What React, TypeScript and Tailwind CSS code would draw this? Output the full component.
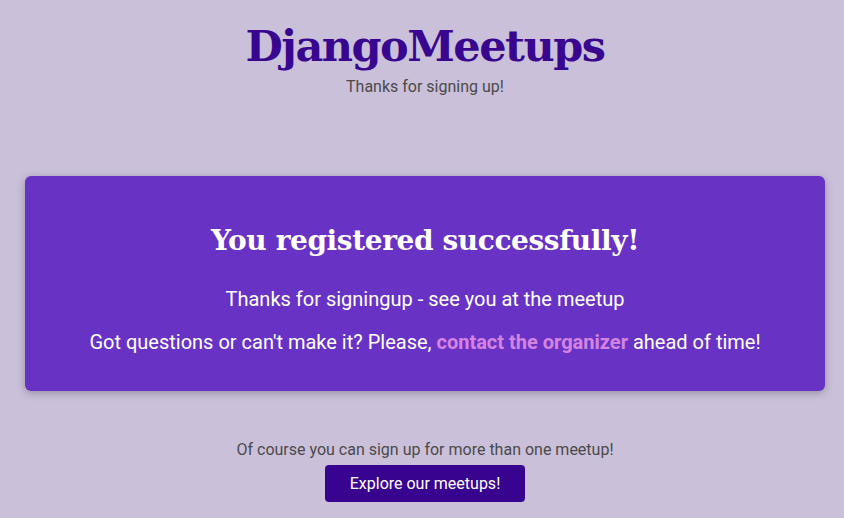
const App = () => {
  return (
    <div className="min-h-screen bg-[#cac0da] font-['Roboto',sans-serif] text-[#4a4a4a]">
      <div className="ml-[25px] w-[800px]">
        <header className="flex flex-col items-center pt-[18px]">
          <h1 className="font-['DejaVu_Serif',serif] text-[43px] leading-[56px] font-bold tracking-[-1.5px] text-[#39078f]">
            DjangoMeetups
          </h1>
          <p className="mt-[3px] text-base leading-5">Thanks for signing up!</p>
        </header>
        <main className="pt-[79px]">
          <section className="flex flex-col items-center rounded-md bg-[#6833c5] pt-[45px] pb-[37px] text-white shadow-[0_2px_8px_rgba(0,0,0,0.26)]">
            <h2 className="font-['DejaVu_Serif',serif] text-[28px] leading-10 font-bold tracking-[-0.4px]">
              You registered successfully!
            </h2>
            <p className="mt-[26px] text-xl leading-6">Thanks for signingup - see you at the meetup</p>
            <p className="mt-[19px] text-xl leading-6">
              Got questions or can't make it? Please,{" "}
              <a href="#" className="font-bold text-[#d583e1]">
                contact the organizer
              </a>{" "}
              ahead of time!
            </p>
          </section>
        </main>
        <footer className="flex flex-col items-center pt-[49px]">
          <p className="text-base leading-5">Of course you can sign up for more than one meetup!</p>
          <button className="mt-[5px] h-[37px] w-[200px] rounded bg-[#38048f] text-base text-white">
            Explore our meetups!
          </button>
        </footer>
      </div>
    </div>
  );
};

export default App;
